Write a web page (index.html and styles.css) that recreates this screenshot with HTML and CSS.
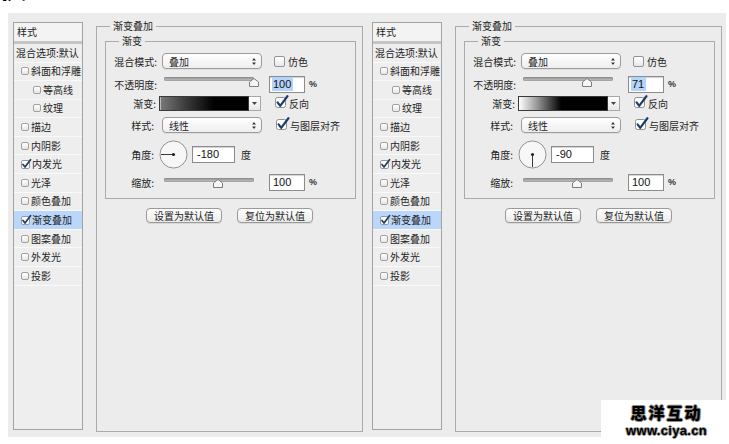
FILE: index.html
```html
<!DOCTYPE html>
<html lang="zh-CN">
<head>
<meta charset="utf-8">
<title>图层样式 - 渐变叠加</title>
<link rel="stylesheet" href="styles.css">
</head>
<body>
<p class="caption">换上</p>

<div class="dialogs">

  <!-- first dialog: reversed dark gradient, -180° -->
  <section class="dialog">
    <ul class="style-list">
      <li class="list-head">样式</li>
      <li class="list-blend">混合选项:默认</li>
      <li class="item"><span class="mini-cb"></span>斜面和浮雕</li>
      <li class="item sub"><span class="mini-cb"></span>等高线</li>
      <li class="item sub"><span class="mini-cb"></span>纹理</li>
      <li class="item"><span class="mini-cb"></span>描边</li>
      <li class="item"><span class="mini-cb"></span>内阴影</li>
      <li class="item"><svg class="mini-cb checked" viewBox="0 0 10 10"><rect x="0.5" y="1.5" width="8" height="8" rx="1.5"/><path d="M2 5.5 L4 8 L9.5 0.8"/></svg>内发光</li>
      <li class="item"><span class="mini-cb"></span>光泽</li>
      <li class="item"><span class="mini-cb"></span>颜色叠加</li>
      <li class="item active"><svg class="mini-cb checked" viewBox="0 0 10 10"><rect x="0.5" y="1.5" width="8" height="8" rx="1.5"/><path d="M2 5.5 L4 8 L9.5 0.8"/></svg>渐变叠加</li>
      <li class="item"><span class="mini-cb"></span>图案叠加</li>
      <li class="item"><span class="mini-cb"></span>外发光</li>
      <li class="item"><span class="mini-cb"></span>投影</li>
    </ul>

    <fieldset class="group outer">
      <legend>渐变叠加</legend>
      <fieldset class="group inner">
        <legend>渐变</legend>

        <div class="row r1">
          <span class="label">混合模式:</span>
          <span class="select">叠加<svg class="updown" viewBox="0 0 5 9"><path d="M2.5 0 L5 3.2 L0 3.2 Z M2.5 9 L5 5.8 L0 5.8 Z"/></svg></span>
          <span class="check c1"><span class="cb"></span>仿色</span>
        </div>

        <div class="row r2">
          <span class="label">不透明度:</span>
          <span class="slider"><span class="track"></span><svg class="thumb" style="left: calc(100% - 5px)" viewBox="0 0 10 9"><path d="M5 0.5 L9.5 4 L9.5 8.5 L0.5 8.5 L0.5 4 Z"/></svg></span>
          <span class="num wide"><span class="sel">100</span></span>
          <span class="unit">%</span>
        </div>

        <div class="row r3">
          <span class="label l-grad">渐变:</span>
          <span class="gradient"><span class="gradient-bar dark"></span><span class="gradient-arrow"><svg viewBox="0 0 5 3"><path d="M0 0 L5 0 L2.5 3 Z"/></svg></span></span>
          <span class="check c3"><svg class="cb checked" viewBox="0 0 14 14"><rect x="0.5" y="2.5" width="10" height="10" rx="2"/><path d="M2.6 7.4 L5.2 10.8 L12.6 1"/></svg>反向</span>
        </div>

        <div class="row r4">
          <span class="label l-short">样式:</span>
          <span class="select">线性<svg class="updown" viewBox="0 0 5 9"><path d="M2.5 0 L5 3.2 L0 3.2 Z M2.5 9 L5 5.8 L0 5.8 Z"/></svg></span>
          <span class="check c4"><svg class="cb checked" viewBox="0 0 14 14"><rect x="0.5" y="2.5" width="10" height="10" rx="2"/><path d="M2.6 7.4 L5.2 10.8 L12.6 1"/></svg>与图层对齐</span>
        </div>

        <div class="row r5">
          <span class="label l-short">角度:</span>
          <svg class="dial" viewBox="0 0 30 30"><circle class="dial-face" cx="15" cy="15" r="14"/><line x1="15" y1="15" x2="2" y2="15"/><circle class="dial-dot" cx="15" cy="15" r="1.6"/></svg>
          <span class="num angle">-180</span>
          <span class="deg">度</span>
        </div>

        <div class="row r6">
          <span class="label l-short">缩放:</span>
          <span class="slider"><span class="track"></span><svg class="thumb" style="left: calc(60% - 5px)" viewBox="0 0 10 9"><path d="M5 0.5 L9.5 4 L9.5 8.5 L0.5 8.5 L0.5 4 Z"/></svg></span>
          <span class="num wide">100</span>
          <span class="unit">%</span>
        </div>
      </fieldset>

      <div class="buttons">
        <button class="btn">设置为默认值</button>
        <button class="btn">复位为默认值</button>
      </div>
    </fieldset>
  </section>

  <!-- second dialog: white-to-black gradient at 71%, -90° -->
  <section class="dialog">
    <ul class="style-list">
      <li class="list-head">样式</li>
      <li class="list-blend">混合选项:默认</li>
      <li class="item"><span class="mini-cb"></span>斜面和浮雕</li>
      <li class="item sub"><span class="mini-cb"></span>等高线</li>
      <li class="item sub"><span class="mini-cb"></span>纹理</li>
      <li class="item"><span class="mini-cb"></span>描边</li>
      <li class="item"><span class="mini-cb"></span>内阴影</li>
      <li class="item"><svg class="mini-cb checked" viewBox="0 0 10 10"><rect x="0.5" y="1.5" width="8" height="8" rx="1.5"/><path d="M2 5.5 L4 8 L9.5 0.8"/></svg>内发光</li>
      <li class="item"><span class="mini-cb"></span>光泽</li>
      <li class="item"><span class="mini-cb"></span>颜色叠加</li>
      <li class="item active"><svg class="mini-cb checked" viewBox="0 0 10 10"><rect x="0.5" y="1.5" width="8" height="8" rx="1.5"/><path d="M2 5.5 L4 8 L9.5 0.8"/></svg>渐变叠加</li>
      <li class="item"><span class="mini-cb"></span>图案叠加</li>
      <li class="item"><span class="mini-cb"></span>外发光</li>
      <li class="item"><span class="mini-cb"></span>投影</li>
    </ul>

    <fieldset class="group outer">
      <legend>渐变叠加</legend>
      <fieldset class="group inner">
        <legend>渐变</legend>

        <div class="row r1">
          <span class="label">混合模式:</span>
          <span class="select">叠加<svg class="updown" viewBox="0 0 5 9"><path d="M2.5 0 L5 3.2 L0 3.2 Z M2.5 9 L5 5.8 L0 5.8 Z"/></svg></span>
          <span class="check c1"><span class="cb"></span>仿色</span>
        </div>

        <div class="row r2">
          <span class="label">不透明度:</span>
          <span class="slider"><span class="track"></span><svg class="thumb" style="left: calc(71% - 5px)" viewBox="0 0 10 9"><path d="M5 0.5 L9.5 4 L9.5 8.5 L0.5 8.5 L0.5 4 Z"/></svg></span>
          <span class="num wide"><span class="sel">71</span></span>
          <span class="unit">%</span>
        </div>

        <div class="row r3">
          <span class="label l-grad">渐变:</span>
          <span class="gradient"><span class="gradient-bar light"></span><span class="gradient-arrow"><svg viewBox="0 0 5 3"><path d="M0 0 L5 0 L2.5 3 Z"/></svg></span></span>
          <span class="check c3"><svg class="cb checked" viewBox="0 0 14 14"><rect x="0.5" y="2.5" width="10" height="10" rx="2"/><path d="M2.6 7.4 L5.2 10.8 L12.6 1"/></svg>反向</span>
        </div>

        <div class="row r4">
          <span class="label l-short">样式:</span>
          <span class="select">线性<svg class="updown" viewBox="0 0 5 9"><path d="M2.5 0 L5 3.2 L0 3.2 Z M2.5 9 L5 5.8 L0 5.8 Z"/></svg></span>
          <span class="check c4"><svg class="cb checked" viewBox="0 0 14 14"><rect x="0.5" y="2.5" width="10" height="10" rx="2"/><path d="M2.6 7.4 L5.2 10.8 L12.6 1"/></svg>与图层对齐</span>
        </div>

        <div class="row r5">
          <span class="label l-short">角度:</span>
          <svg class="dial" viewBox="0 0 30 30"><circle class="dial-face" cx="15" cy="15" r="14"/><line x1="15" y1="15" x2="15" y2="28"/><circle class="dial-dot" cx="15" cy="15" r="1.6"/></svg>
          <span class="num angle">-90</span>
          <span class="deg">度</span>
        </div>

        <div class="row r6">
          <span class="label l-short">缩放:</span>
          <span class="slider"><span class="track"></span><svg class="thumb" style="left: calc(60% - 5px)" viewBox="0 0 10 9"><path d="M5 0.5 L9.5 4 L9.5 8.5 L0.5 8.5 L0.5 4 Z"/></svg></span>
          <span class="num wide">100</span>
          <span class="unit">%</span>
        </div>
      </fieldset>

      <div class="buttons">
        <button class="btn">设置为默认值</button>
        <button class="btn">复位为默认值</button>
      </div>
    </fieldset>
  </section>

</div>

<div class="watermark">
  <div class="wm-name">思洋互动</div>
  <div class="wm-url">www.ciya.cn</div>
</div>
</body>
</html>
```

FILE: styles.css
```css
* {
  box-sizing: border-box;
}

body {
  margin: 0;
  width: 729px;
  height: 444px;
  overflow: hidden;
  position: relative;
  background: #fff;
  color: #1e1e1e;
  font-family: "Noto Sans CJK SC", sans-serif;
  font-size: 10px;
}

/* heading line above the dialogs, mostly scrolled out of view */
.caption {
  margin: -24px 0 0 1px;
  height: 24px;
  font-size: 25px;
  line-height: 24px;
  color: #000;
}

.dialogs {
  display: flex;
  margin: 13px 0 0 8px;
}

.dialog {
  width: 359px;
  height: 424px;
  flex: none;
  display: flex;
  align-items: flex-start;
  gap: 13px;
  padding: 7px 0 0 5px;
  background: #ececec;
}

/* ---------- left style list ---------- */
.style-list {
  width: 70px;
  height: 408px;
  flex: none;
  margin: 2px 0 0;
  padding: 0;
  list-style: none;
  border: 1px solid #a3a3a3;
  background: #eeeeee;
  font-size: 10px;
  line-height: 1;
}

.list-head {
  height: 21px;
  padding: 4px 0 0 3px;
  background: #f3f3f3;
  border-bottom: 3px solid #c5c5c5;
}

.list-blend {
  height: 18.5px;
  padding: 4px 0 0 2px;
  white-space: nowrap;
  border-bottom: 1px solid #fafafa;
}

.item {
  height: 18.6px;
  display: flex;
  align-items: center;
  gap: 2px;
  padding-left: 7px;
  border-bottom: 1px solid #f9f9f9;
  white-space: nowrap;
}

.item.sub {
  padding-left: 19px;
}

.item.active {
  background: #bad6fa;
}

.mini-cb {
  width: 8px;
  height: 8px;
  flex: none;
  border: 1px solid #a0a0a0;
  border-radius: 2px;
  background: linear-gradient(#ffffff, #e6e6e6);
}

svg.mini-cb {
  width: 10px;
  height: 10px;
  border: none;
  background: none;
  overflow: visible;
  margin-right: -1px;
}

svg.mini-cb rect {
  fill: #fff;
  stroke: #9a9a9a;
}

svg.mini-cb path {
  fill: none;
  stroke: #243f6b;
  stroke-width: 1.8;
  stroke-linecap: round;
  stroke-linejoin: round;
}

/* ---------- group boxes ---------- */
.group {
  margin: 0;
  padding: 0;
  min-width: 0;
  border: 1px solid #aaaaaa;
}

.group > legend {
  margin-left: 13px;
  padding: 0 3px;
  font-size: 10px;
  line-height: 12px;
}

.outer {
  width: 267px;
  height: 412px;
  flex: none;
}

.inner {
  margin: 3px 6px 0 8px;
  padding: 0 0 5px;
}

/* ---------- control rows ---------- */
.row {
  display: flex;
  align-items: center;
  white-space: nowrap;
}

.r1 { height: 28px; }
.r2 { height: 18px; }
.r3 { height: 20px; }
.r4 { height: 24px; }
.r5 { height: 34px; }
.r6 { height: 22px; }

.label {
  width: 52px;
  flex: none;
  text-align: right;
  padding-right: 1px;
}

.label.l-grad {
  padding-right: 2px;
}

.label.l-short {
  padding-right: 4px;
}

.select {
  width: 100px;
  height: 16px;
  margin-left: 4px;
  display: flex;
  align-items: center;
  padding: 0 5px 0 6px;
  border: 1px solid #9c9c9c;
  border-radius: 4px;
  background: linear-gradient(#ffffff, #eeeeee);
  box-shadow: 0 1px 0 rgba(0, 0, 0, 0.06);
}

.updown {
  width: 4px;
  height: 7px;
  margin-left: auto;
  fill: #333;
}

.check {
  display: flex;
  align-items: center;
  gap: 3px;
}

.check.c1 { margin-left: 12px; }
.check.c3 { margin-left: 14px; }
.check.c4 { margin-left: 14px; }

.cb {
  width: 11px;
  height: 11px;
  flex: none;
  border: 1px solid #939393;
  border-radius: 2px;
  background: linear-gradient(#ffffff, #e9e9e9);
}

svg.cb {
  width: 14px;
  height: 14px;
  border: none;
  background: none;
  margin-right: -3px;
  margin-top: -2px;
}

svg.cb rect {
  fill: #fff;
  stroke: #8e8e8e;
}

svg.cb path {
  fill: none;
  stroke: #1f3c6c;
  stroke-width: 2.2;
  stroke-linecap: round;
  stroke-linejoin: round;
}

/* slider: rounded groove with a pentagon thumb */
.slider {
  position: relative;
  width: 90px;
  height: 12px;
  flex: none;
  align-self: flex-start;
}

.r2 .slider {
  margin: 2px 0 0 6px;
}

.r6 .slider {
  margin: 7px 0 0 6px;
}

.track {
  display: block;
  height: 4px;
  border-radius: 2px;
  background: linear-gradient(#8d8d8d, #c9c9c9);
  box-shadow: inset 0 0 0 0.5px #888;
}

.thumb {
  position: absolute;
  top: 1px;
  width: 10px;
  height: 9px;
}

.thumb path {
  fill: #f6f6f6;
  stroke: #7d7d7d;
  stroke-width: 1;
  stroke-linejoin: round;
}

.num {
  height: 17px;
  display: flex;
  align-items: center;
  padding-left: 2px;
  border: 1px solid #8c8c8c;
  background: #fff;
  box-shadow: inset 0 1px 1px rgba(0, 0, 0, 0.18);
  font-family: "Liberation Sans", Arial, sans-serif;
  font-size: 11px;
  color: #111;
}

.num.wide {
  width: 36px;
  margin-left: 15px;
  padding-left: 3px;
}

.sel {
  display: inline-block;
  line-height: 14px;
  padding: 0 2px 0 1px;
  margin-left: -1px;
  background: #b5d4fb;
}

.unit {
  margin-left: 4px;
  font-family: "Liberation Sans", Arial, sans-serif;
  font-size: 9px;
  font-weight: bold;
  color: #333;
}

/* gradient swatch with its picker arrow */
.gradient {
  width: 102px;
  height: 15px;
  margin-left: 1px;
  display: flex;
}

.gradient-bar {
  flex: 1;
  border: 1px solid #3a3a3a;
}

.gradient-bar.dark {
  background: linear-gradient(to right, #7a7a7a 0%, #3a3a3a 30%, #000 62%);
  box-shadow: inset 1px 0 0 #bbb;
}

.gradient-bar.light {
  background: linear-gradient(to right, #ffffff 0%, #9a9a9a 20%, #000 48%);
}

.gradient-arrow {
  width: 12px;
  display: flex;
  align-items: center;
  justify-content: center;
  border: 1px solid #a8a8a8;
  border-left: none;
  background: linear-gradient(#ffffff, #e8e8e8);
}

.gradient-arrow svg {
  width: 5px;
  height: 3px;
  fill: #444;
}

/* angle dial */
.dial {
  width: 29px;
  height: 29px;
  margin-left: 1px;
  flex: none;
}

.dial-face {
  fill: #f7f7f7;
  stroke: #8f8f8f;
  stroke-width: 1;
}

.dial line {
  stroke: #333;
  stroke-width: 1;
}

.dial-dot {
  fill: #222;
}

.num.angle {
  width: 43px;
  margin-left: 4px;
  padding-left: 4px;
}

.deg {
  margin-left: 6px;
}

/* buttons under the group */
.buttons {
  display: flex;
  justify-content: center;
  gap: 15px;
  margin-top: 9px;
}

.btn {
  width: 76px;
  height: 15px;
  padding: 0;
  border: 1px solid #9a9a9a;
  border-radius: 4px;
  background: linear-gradient(#ffffff, #ebebeb);
  box-shadow: 0 1px 0 rgba(0, 0, 0, 0.08);
  font-family: "Noto Sans CJK SC", sans-serif;
  font-size: 10px;
  line-height: 13px;
  color: #1e1e1e;
}

/* site stamp in the lower right corner */
.watermark {
  position: absolute;
  left: 601px;
  top: 400px;
  width: 128px;
  height: 44px;
  background: #fff;
  text-align: center;
  color: #000;
  padding-left: 3px;
}

.wm-name {
  margin-top: 4px;
  font-family: "Noto Sans CJK SC", sans-serif;
  font-size: 16px;
  font-weight: 900;
  line-height: 17px;
  letter-spacing: 2px;
  text-shadow: 1px 0 #888, -1px 0 #888, 0 1px #888, 0 -1px #888;
}

.wm-url {
  margin-top: 3px;
  font-family: "Liberation Sans", Arial, sans-serif;
  font-size: 13px;
  font-weight: bold;
  line-height: 13px;
  letter-spacing: 0.3px;
  text-shadow: 1px 0 #999, -1px 0 #999, 0 1px #999, 0 -1px #999;
}
```
